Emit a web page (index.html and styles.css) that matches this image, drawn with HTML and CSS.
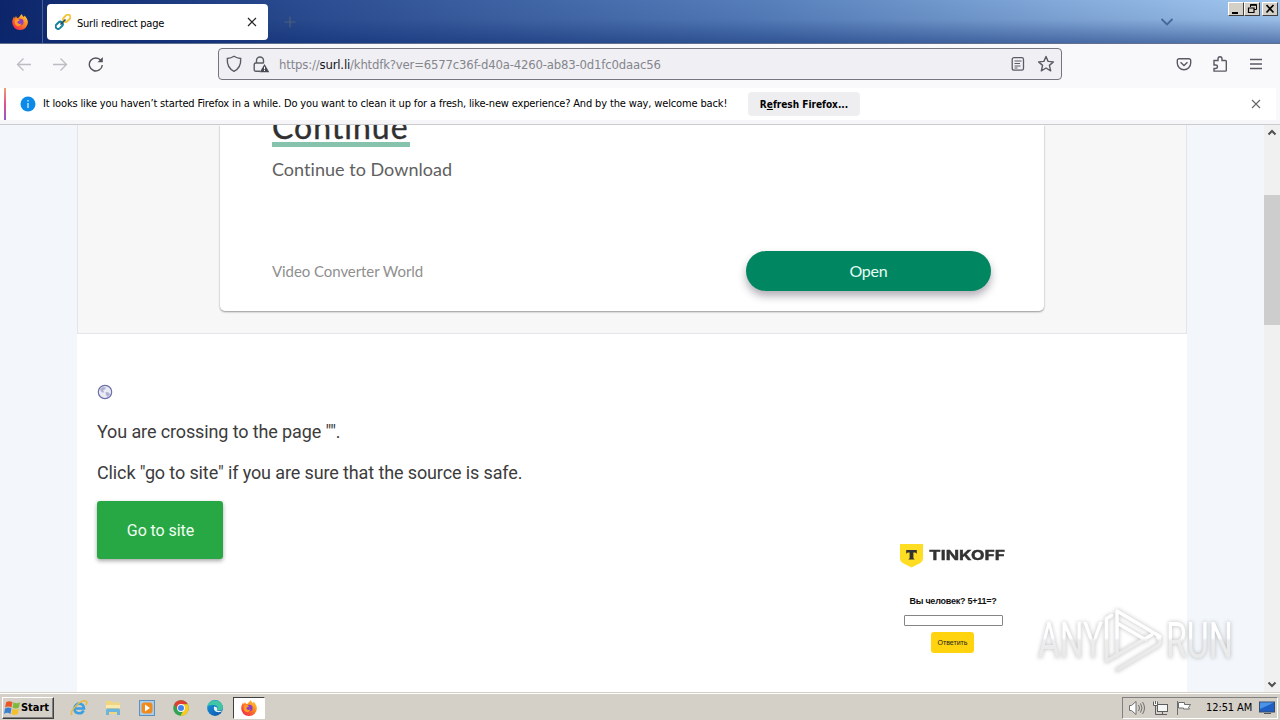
FILE: index.html
```
<!DOCTYPE html>
<html lang="en">
<head>
<meta charset="utf-8">
<title>Surli redirect page</title>
<link rel="stylesheet" href="styles.css">
</head>
<body>
<svg class="defs" width="0" height="0" aria-hidden="true">
  <defs>
    <linearGradient id="fox" x1="1" y1="0" x2="0.2" y2="1"><stop offset="0" stop-color="#ffe04a"/><stop offset=".45" stop-color="#ff8a1e"/><stop offset="1" stop-color="#f0264e"/></linearGradient>
    <linearGradient id="edge" x1="0" y1="0" x2="1" y2="1"><stop offset="0" stop-color="#1a9be0"/><stop offset="1" stop-color="#0c4fa8"/></linearGradient>
    <linearGradient id="mark" gradientUnits="userSpaceOnUse" x1="0" y1="0" x2="0" y2="70"><stop offset="0" stop-color="#fff"/><stop offset=".48" stop-color="#fff"/><stop offset=".52" stop-color="#ededee"/><stop offset="1" stop-color="#e6e6e7"/></linearGradient>
    <symbol id="firefox" viewBox="0 0 16 16">
      <path fill="url(#fox)" d="M8 16a7.6 7.6 0 0 1-7.8-7.4C.2 6 1 4.2 2.2 2.6l.5 1.8L4 2l1 2 2-.5C7.600 2 9 .8 10 0c0 1.600 1 2.200 2 3l.5-1.500C14.500 3.500 16 6 15.900 8.600A7.700 7.700 0 0 1 8 16z"/>
      <circle cx="8.300" cy="8" r="3.200" fill="#8a3fc6"/>
      <path fill="#ff9a22" d="M3 5.500c2-.8 3.500-.3 5 .8-1.200 1.200-3 .8-2.600 2.300.5 1.700 3 1.900 4 .4-.2 2.400-2.700 3.800-4.800 2.800C2.700 10.900 2.300 8 3 5.500z"/>
    </symbol>
  </defs>
</svg>

<header class="titlebar">
  <div class="app-slot"><svg width="16" height="16"><use href="#firefox"/></svg></div>
  <div class="tab">
    <svg width="16" height="16" viewBox="0 0 16 16" fill="none" stroke-width="2">
      <rect x="8" y="1.200" width="8" height="5" rx="2.500" stroke="#f2c63c" transform="rotate(-45 12 4) translate(-.3 .3)"/>
      <rect x="0" y="9" width="8" height="5" rx="2.500" stroke="#16849c" transform="rotate(-45 4 11.500) translate(.3 0)"/>
      <path d="M5.500 10.500l5-5" stroke="#2c4a55" stroke-width="1.600"/>
    </svg>
    <span class="tab-title">Surli redirect page</span>
    <svg class="tab-close" width="10" height="10" viewBox="0 0 10 10"><path d="M1 1l8 8M9 1l-8 8" stroke="#222" stroke-width="1.200"/></svg>
  </div>
  <svg class="newtab" width="12" height="12" viewBox="0 0 12 12"><path d="M6 .5v11M.5 6h11" stroke="#4c5f7a" stroke-width="1.200"/></svg>
  <svg class="tabs-menu" width="14" height="8" viewBox="0 0 14 8"><path d="M1.500 1l5.500 5.500L12.500 1" fill="none" stroke="#44699c" stroke-width="1.800"/></svg>
  <div class="winbtns">
    <span class="winbtn"><svg width="14" height="12"><path d="M3 9h6v2H3z"/></svg></span>
    <span class="winbtn gap"><svg width="14" height="12" fill="none" stroke="#000"><path d="M5.500 4V1.500h6v5H9M5 2.300h7" /><path d="M3 5h6.500M3.500 4.500v5h5.500v-5" stroke-width="1.200"/></svg></span>
    <span class="winbtn"><svg width="14" height="12"><path d="M3.500 2l7 7.500M10.500 2l-7 7.500" stroke="#000" stroke-width="1.700"/></svg></span>
  </div>
</header>

<nav class="toolbar">
  <div class="nav-left">
    <svg width="16" height="16" viewBox="0 0 16 16" fill="none" stroke="#bcbcc2" stroke-width="1.300"><path d="M15 8.500H1.500M7.500 2.500l-6 6 6 6"/></svg>
    <svg width="16" height="16" viewBox="0 0 16 16" fill="none" stroke="#bcbcc2" stroke-width="1.300"><path d="M1 8.500h13.500M8.500 2.500l6 6-6 6"/></svg>
    <svg width="16" height="16" viewBox="0 0 16 16" fill="none" stroke="#54545c" stroke-width="1.400"><path d="M14.300 9A6.500 6.500 0 1 1 13 4.500"/><path d="M14.800 1v5.300H9.500z" fill="#54545c" stroke="none"/></svg>
  </div>
  <div class="urlbar">
    <svg width="16" height="18" viewBox="0 0 16 18" fill="none" stroke="#5b5b66" stroke-width="1.400"><path d="M8 1.300c2 1.400 4 2 6.700 2.200.4 6.500-2 10.500-6.700 12.800C3.300 14 .9 10 1.300 3.500 4 3.300 6 2.700 8 1.300z"/></svg>
    <svg class="lock" width="17" height="17" viewBox="0 0 17 17" fill="none" stroke="#5b5b66" stroke-width="1.400"><path d="M3.500 7V4.500a3.500 3.500 0 0 1 7 0V7M7 15.300H2.700A1.500 1.500 0 0 1 1.200 13.800V8.500A1.500 1.500 0 0 1 2.700 7h8.100"/><path d="M11.500 8l4.800 8.300H6.700z" fill="#4a4a55" stroke="none"/><path d="M11.500 10.800v2.500M11.500 14v1" stroke="#fff" stroke-width="1"/></svg>
    <span class="url">https://<b>surl.li</b>/khtdfk?ver=6577c36f-d40a-4260-ab83-0d1fc0daac56</span>
    <svg class="reader" width="14" height="16" viewBox="0 0 14 16" fill="none" stroke="#5b5b66" stroke-width="1.300"><rect x="1.200" y="1.700" width="11.300" height="12.500" rx="1.800"/><path d="M3.500 5h7M3.500 7.500h5.500M3.500 10h6M3.500 12h3" stroke-width="1.100"/></svg>
    <svg width="18" height="18" viewBox="0 0 18 18" fill="none" stroke="#5b5b66" stroke-width="1.400" stroke-linejoin="round"><path d="M9 1.500l2.100 4.900 5.300.5-4 3.500 1.300 5.400L9 13l-4.700 2.800 1.300-5.400-4-3.500 5.300-.5z"/></svg>
  </div>
  <div class="nav-right">
    <svg width="16" height="16" viewBox="0 0 16 16" fill="none" stroke="#5b5b66" stroke-width="1.400"><path d="M3 2.700h10A1.700 1.700 0 0 1 14.700 4.400V7A6.700 6.700 0 0 1 1.300 7V4.400A1.700 1.700 0 0 1 3 2.700z"/><path d="M4.500 6.200L8 9.500l3.500-3.300"/></svg>
    <svg width="16" height="18" viewBox="0 0 16 18" fill="none" stroke="#5b5b66" stroke-width="1.400"><path d="M1 8V5.500h4V4c0-3 4-3 4 0v1.500h3.500q.8 0 .8.800v9q0 .8-.8.800H1V13.500h1.500c2.600 0 2.600-3.500 0-3.500H1z"/></svg>
    <svg width="14" height="16" viewBox="0 0 14 16"><path d="M0 3.500h12M0 8h12M0 12.500h12" stroke="#5b5b66" stroke-width="1.300"/></svg>
  </div>
</nav>

<div class="notice">
  <span class="notice-accent"></span>
  <svg class="info" width="16" height="16" viewBox="0 0 16 16"><circle cx="8" cy="8" r="7.500" fill="#0b8aea"/><path d="M8 7v5M8 4v1.600" stroke="#d8f0ff" stroke-width="1.300"/></svg>
  <span class="notice-text">It looks like you haven’t started Firefox in a while. Do you want to clean it up for a fresh, like-new experience? And by the way, welcome back!</span>
  <span class="refresh"><span>R<u>e</u>fresh Firefox...</span></span>
  <svg class="notice-close" width="10" height="10" viewBox="0 0 10 10"><path d="M1 1l8 8M9 1l-8 8" stroke="#666" stroke-width="1.100"/></svg>
</div>

<div class="viewport">
  <main class="page">
    <div class="container">
      <section class="ad">
        <div class="card">
          <div class="headline">Continue</div>
          <div class="sub">Continue to Download</div>
          <div class="card-foot">
            <span class="brand">Video Converter World</span>
            <span class="open">Open</span>
          </div>
        </div>
      </section>
      <section class="content">
        <svg class="globe" width="16" height="16" viewBox="0 0 16 16"><circle cx="8" cy="8" r="6.700" fill="#e9ebf4" stroke="#6d6fa8" stroke-width="1.200"/><path d="M3 5l3-2 3 .5-1 2-2 .8 1 1.200-1 1.500-2-1.500zM8.500 8l3.500.5 1 2-2.500 2.500-1.500-2z" fill="#b0b1d2"/></svg>
        <p class="line first">You are crossing to the page "".</p>
        <p class="line second">Click "go to site" if you are sure that the source is safe.</p>
        <span class="go">Go to site</span>
      </section>
    </div>
  </main>
  <div class="scrollbar">
    <svg width="16" height="16" viewBox="0 0 16 16"><path d="M4.500 9.500L8 6l3.500 3.500" fill="none" stroke="#505050" stroke-width="2"/></svg>
    <span class="thumb"></span>
    <svg class="down" width="16" height="16" viewBox="0 0 16 16"><path d="M4.500 6.500L8 10l3.500-3.500" fill="none" stroke="#505050" stroke-width="2"/></svg>
  </div>

  <aside class="captcha">
    <div class="tinkoff">
      <svg width="24" height="24" viewBox="0 0 24 24"><path d="M0 0h23v14.500q0 3-2.600 4.600L11.500 23.500 2.600 19.100Q0 17.500 0 14.500z" fill="#fd2"/><path d="M6.200 6h10.600v3.800l-1.500-1.200h-1.900v5.300l1.200 1.600H8.400l1.200-1.600V8.600H7.700L6.200 9.800z" fill="#333"/></svg>
      <span>TINKOFF</span>
    </div>
    <div class="question">Вы человек? 5+11=?</div>
    <div class="answer"></div>
    <div class="reply">Ответить</div>
  </aside>

  <svg class="watermark" width="210" height="74" viewBox="0 0 210 74">
    <g class="wm-text">
      <text x="4" y="54" textLength="65" lengthAdjust="spacingAndGlyphs">ANY</text>
      <text x="132" y="54" textLength="67" lengthAdjust="spacingAndGlyphs">RUN</text>
    </g>
    <g class="wm-mark">
      <path d="M72.500 57V14.500l5-3"/>
      <path d="M83 49V7l43 25.500M83 19v33M83 19l29 17"/>
      <path d="M72.500 57l45-26M83 66l41-24.500q4-4 0-8"/>
    </g>
  </svg>
</div>

<footer class="taskbar">
  <div class="start">
    <svg width="17" height="15" viewBox="0 0 16 14"><path d="M2 2q3-2 6 0L7 7Q4 5 1 7z" fill="#e8562a"/><path d="M9 2q3 2 6 0l-1 5q-3 2-6 0z" fill="#7fb93c"/><path d="M1 8q3-2 6 0l-1 5q-3-2-6 0z" fill="#3a80d2"/><path d="M8 8q3 2 6 0l-1 5q-3 2-6 0z" fill="#f6bf2c"/></svg>
    <span>Start</span>
  </div>
  <div class="quick">
    <svg width="18" height="18" viewBox="0 0 18 18" fill="none"><path d="M4.500 9.500h9.500c0-6.500-9.500-6.500-9.500 0 0 6 7.500 6 9 2" stroke="#3d9fe0" stroke-width="2.600"/><path d="M2 16C-1 12 12-1 16.500 2.500q1 1-.7 3.500" stroke="#e8b93c" stroke-width="1.500"/></svg>
    <svg width="18" height="18" viewBox="0 0 18 18"><path d="M2 2h6l1 1.500h7V15H2z" fill="#f1d681"/><path d="M2 6h14v3H2z" fill="#f9e9ac"/><path d="M2 16v-5q0-1.500 1.500-1.500h11q1.500 0 1.500 1.500v5h-3v-3H5v3z" fill="#6cb5dc"/></svg>
    <svg width="18" height="18" viewBox="0 0 18 18"><rect x="1.500" y="1.500" width="15" height="15" fill="#a9cdec" stroke="#5d90bd"/><rect x="3.500" y="3.500" width="11" height="11" rx="3" fill="#f18a1c"/><path d="M7 5.500v7l5-3.500z" fill="#fff"/></svg>
    <svg width="18" height="18" viewBox="0 0 18 18"><circle cx="9" cy="9" r="7.800" fill="#32a350"/><path d="M2.200 5.200A7.800 7.800 0 0 1 15.800 5.200H9L6 11z" fill="#e0402f"/><path d="M15.800 5.200A7.800 7.800 0 0 1 8.500 16.800L12.300 10 10 5.200z" fill="#fbc924"/><circle cx="9" cy="9" r="3.900" fill="#fff"/><circle cx="9" cy="9" r="3" fill="#4184ee"/></svg>
    <svg width="18" height="18" viewBox="0 0 18 18"><circle cx="9" cy="9" r="7.900" fill="url(#edge)"/><path d="M1.200 8C2 0 15.500-1 16.800 8c.3 3.500-3.500 4.200-6 3 2-2.200.4-4.500-2.300-4.800C5 5.800 2 6.500 1.200 8z" fill="#3fc7a4"/><path d="M8 7.500c-1 4 2.500 7 7.500 5l1.500-1.500c-2 1.800-5.500 1-6.300.2 1.500-1.500.3-3.500-2.700-3.700z" fill="#e8f4f8"/></svg>
  </div>
  <div class="active-task"><svg width="16" height="16"><use href="#firefox"/></svg></div>
  <div class="tray">
    <svg width="18" height="16" viewBox="0 0 18 16" fill="#fff" stroke="#6e6e6e"><path d="M1.500 5.500h2L8 1.500v13l-4.500-4h-2z"/><path d="M10.500 5q2 3 0 6M12.500 3.500q3 4.500 0 9M14.500 2q4 6 0 12" fill="none"/></svg>
    <svg width="17" height="16" viewBox="0 0 17 16" fill="#f6f6f6" stroke="#5e5e5e"><rect x="5.500" y="4.500" width="10" height="7"/><path d="M7 14.500h8M10.500 12v2M3.500 6v8.500H7" fill="none"/><path d="M1.500 1.500v4h4v-4M3.500 1v3"/></svg>
    <svg width="16" height="16" viewBox="0 0 16 16" fill="#fff" stroke="#6e6e6e"><path d="M2.500 1v14"/><path d="M3.500 2.500h6v2h6l-2 3 1 1.500h-6V8h-5z"/></svg>
    <span class="clock">12:51 AM</span>
    <svg width="16" height="14" viewBox="0 0 16 14"><rect x=".5" y="1" width="15" height="10" fill="#1d5fc2" stroke="#3a4a6a"/><path d="M1 1.500h14L1 8z" fill="#4b93e6"/><path d="M5 12.500h7" stroke="#555"/></svg>
  </div>
</footer>
</body>
</html>
```
FILE: styles.css
```
* { box-sizing: border-box; }
body { margin: 0; width: 1280px; height: 720px; overflow: hidden; display: flex; flex-direction: column; background: #fff; font-family: "DejaVu Sans Condensed", "DejaVu Sans", sans-serif; font-stretch: condensed; font-size: 11px; color: #15141a; }
svg { display: block; flex: none; }
.defs { position: absolute; }

.titlebar { height: 44px; flex: none; display: flex; align-items: center; background: linear-gradient(180deg, rgba(20,40,100,0) 0%, rgba(20,40,100,.08) 45%, rgba(10,40,110,.5) 100%), linear-gradient(90deg, #0c256b 0, #2c4e92 25%, #5780bb 60%, #a3c9f0 100%); border-bottom: 1px solid #60708e; }
.app-slot { width: 43px; height: 43px; padding: 14px 0 0 12px; border-right: 1px solid #4a5e95; }
.tab { width: 221px; height: 36px; margin-left: 4px; padding: 0 11px 0 8px; display: flex; align-items: center; border-radius: 4px; background: #fff; }
.tab-title { margin: 3px 0 0 6px; letter-spacing: -.22px; flex: 1; white-space: nowrap; color: #000; }
.newtab { margin-left: 16px; }
.tabs-menu { margin-left: auto; margin-right: 54px; }
.winbtns { display: flex; align-self: flex-start; margin: 2px 2px 0 0; }
.winbtn { width: 16px; height: 14px; background: #d4d0c8; border: 1px solid; border-color: #fff #404040 #404040 #fff; }
.winbtn.gap { margin-right: 2px; }

.toolbar { height: 44px; flex: none; display: flex; align-items: center; background: #f9f9fb; padding-bottom: 4px; }
.nav-left { display: flex; gap: 20px; padding-left: 16px; width: 218px; }
.urlbar { width: 844px; height: 32px; display: flex; align-items: center; padding: 0 6px 0 7px; border: 1px solid #75757f; border-radius: 4px; background: #f0f0f4; }
.lock { margin-left: 11px; }
.url { margin-left: 9px; flex: 1; font-size: 13px; letter-spacing: -.18px; color: #85858c; white-space: nowrap; }
.url b { font-weight: 400; color: #15141a; }
.reader { margin-right: 12px; }
.nav-right { display: flex; align-items: center; gap: 21px; margin-left: 114px; }

.notice { height: 37px; flex: none; display: flex; align-items: center; padding-bottom: 5px; background: #fff; border-bottom: 1px solid #cbcbcf; box-shadow: inset 0 -4px #f6f6f8, inset -4px 0 #f9f9fb; padding-left: 4px; }
.notice-accent { width: 2px; height: 32px; background: linear-gradient(#f0a070, #e0508c 50%, #9059c8); }
.info { margin-left: 14px; }
.notice-text { width: 685px; margin-left: 7px; white-space: nowrap; letter-spacing: -.147px; color: #000; }
.refresh { margin-left: 20px; width: 112px; height: 24px; padding-top: 1px; display: flex; align-items: center; justify-content: center; white-space: nowrap; background: #eeeef0; border-radius: 4px; font-size: 10px; font-weight: 700; color: #000; }
.notice-close { margin-left: auto; margin-right: 19px; }

.viewport { height: 567px; flex: none; display: flex; position: relative; overflow: hidden; }
.page { flex: 1; background: #f3f7fb; padding-left: 77px; }
.container { width: 1110px; height: 567px; background: #fff; font-stretch: normal; }
.ad { height: 209px; padding-left: 142px; background: #f7f7f7; border: 1px solid #e2e5ea; border-top: 0; }
.card { width: 824px; height: 186px; padding: 0 53px 0 52px; background: #fff; border-radius: 0 0 5px 5px; box-shadow: 0 1px 2px rgba(0,0,0,.4); font-family: Lato, sans-serif; display: flex; flex-direction: column; align-items: flex-start; }
.headline { margin-top: -15px; height: 37px; width: 138px; font-size: 32px; line-height: 33px; letter-spacing: 1px; white-space: nowrap; color: #303030; -webkit-text-stroke: .4px #303030; border-bottom: 5px solid #85c3ad; }
.sub { margin-top: 11px; font-size: 18px; line-height: 22px; letter-spacing: .03px; color: #606060; }
.card-foot { width: 100%; margin-top: 71px; display: flex; justify-content: space-between; align-items: center; }
.brand { margin-top: -1px; font-size: 15px; letter-spacing: -.07px; color: #8f8f8f; }
.open { width: 245px; height: 40px; line-height: 40px; text-align: center; font-size: 16px; letter-spacing: -.2px; color: #e8fbf5; background: #008761; border-radius: 20px; box-shadow: 0 5px 9px rgba(60,50,70,.4); }
.content { padding: 50px 20px 0; font-family: Roboto, sans-serif; color: #3c3c3c; }
.line { margin: 0; font-size: 18px; line-height: 24px; letter-spacing: -.12px; white-space: nowrap; }
.first { margin-top: 20px; }
.second { margin-top: 17px; }
.go { display: block; margin-top: 16px; width: 126px; height: 58px; line-height: 59px; padding-left: 1px; text-align: center; font-size: 16px; letter-spacing: -.07px; color: #f0fff2; background: #28a745; border-radius: 3px; box-shadow: 0 2px 4px rgba(0,0,0,.35); }

.scrollbar { width: 16px; background: #f0f0f0; display: flex; flex-direction: column; }
.thumb { height: 130px; margin-top: 54px; background: #cdcdcd; }
.down { margin-top: auto; }

.captcha { position: absolute; left: 893px; top: 419px; width: 120px; display: flex; flex-direction: column; align-items: center; font-family: "Liberation Sans", Arial, sans-serif; font-stretch: normal; color: #222; }
.tinkoff { display: flex; align-items: center; width: 106px; height: 24px; gap: 5px; }
.tinkoff span { margin-top: -2px; font: 700 13.5px Inter, sans-serif; color: #333; -webkit-text-stroke: .4px #333; transform: scaleX(1.3); transform-origin: 0 50%; white-space: nowrap; }
.question { margin-top: 28px; font-size: 9px; line-height: 10px; font-weight: 700; letter-spacing: -.24px; white-space: nowrap; color: #111; }
.answer { margin-top: 9px; width: 99px; height: 11px; border: 1px solid #858585; border-radius: 1px; background: #fff; }
.reply { margin: 6px 1px 0 0; width: 43px; height: 21px; line-height: 21px; text-align: center; font-size: 7px; background: #ffd40f; border-radius: 3px; }

.watermark { position: absolute; left: 1034px; top: 479px; filter: drop-shadow(0 0 2px rgba(80,85,90,.4)); }
.wm-text { font: 400 50px Roboto, sans-serif; font-stretch: normal; fill: url(#mark); }
.wm-mark { fill: none; stroke: url(#mark); stroke-width: 3.5; stroke-linecap: round; stroke-linejoin: round; }

.taskbar { height: 28px; flex: none; display: flex; align-items: center; padding: 3px 2px 1px; background: #d4d0c8; border-top: 1px solid #d4d0c8; box-shadow: inset 0 1px #fff; }
.start { width: 52px; height: 22px; display: flex; align-items: center; padding-left: 1px; border: 1px solid; border-color: #fff #404040 #404040 #fff; box-shadow: inset -1px -1px #808080; font-weight: 700; color: #000; }
.start span { letter-spacing: -.05px; }
.quick { display: flex; gap: 16px; margin-left: 16px; }
.active-task { width: 32px; height: 22px; margin-left: 9px; padding: 2px 0 0 7px; background: #fff; border: 1px solid; border-color: #404040 #fff #fff #404040; }
.tray { margin-left: auto; width: 156px; height: 22px; display: flex; align-items: center; gap: 6px; padding-left: 5px; border: 1px solid; border-color: #808080 #fff #fff #808080; }
.clock { margin-left: 9px; width: 47px; white-space: nowrap; letter-spacing: -.1px; color: #000; }
```
